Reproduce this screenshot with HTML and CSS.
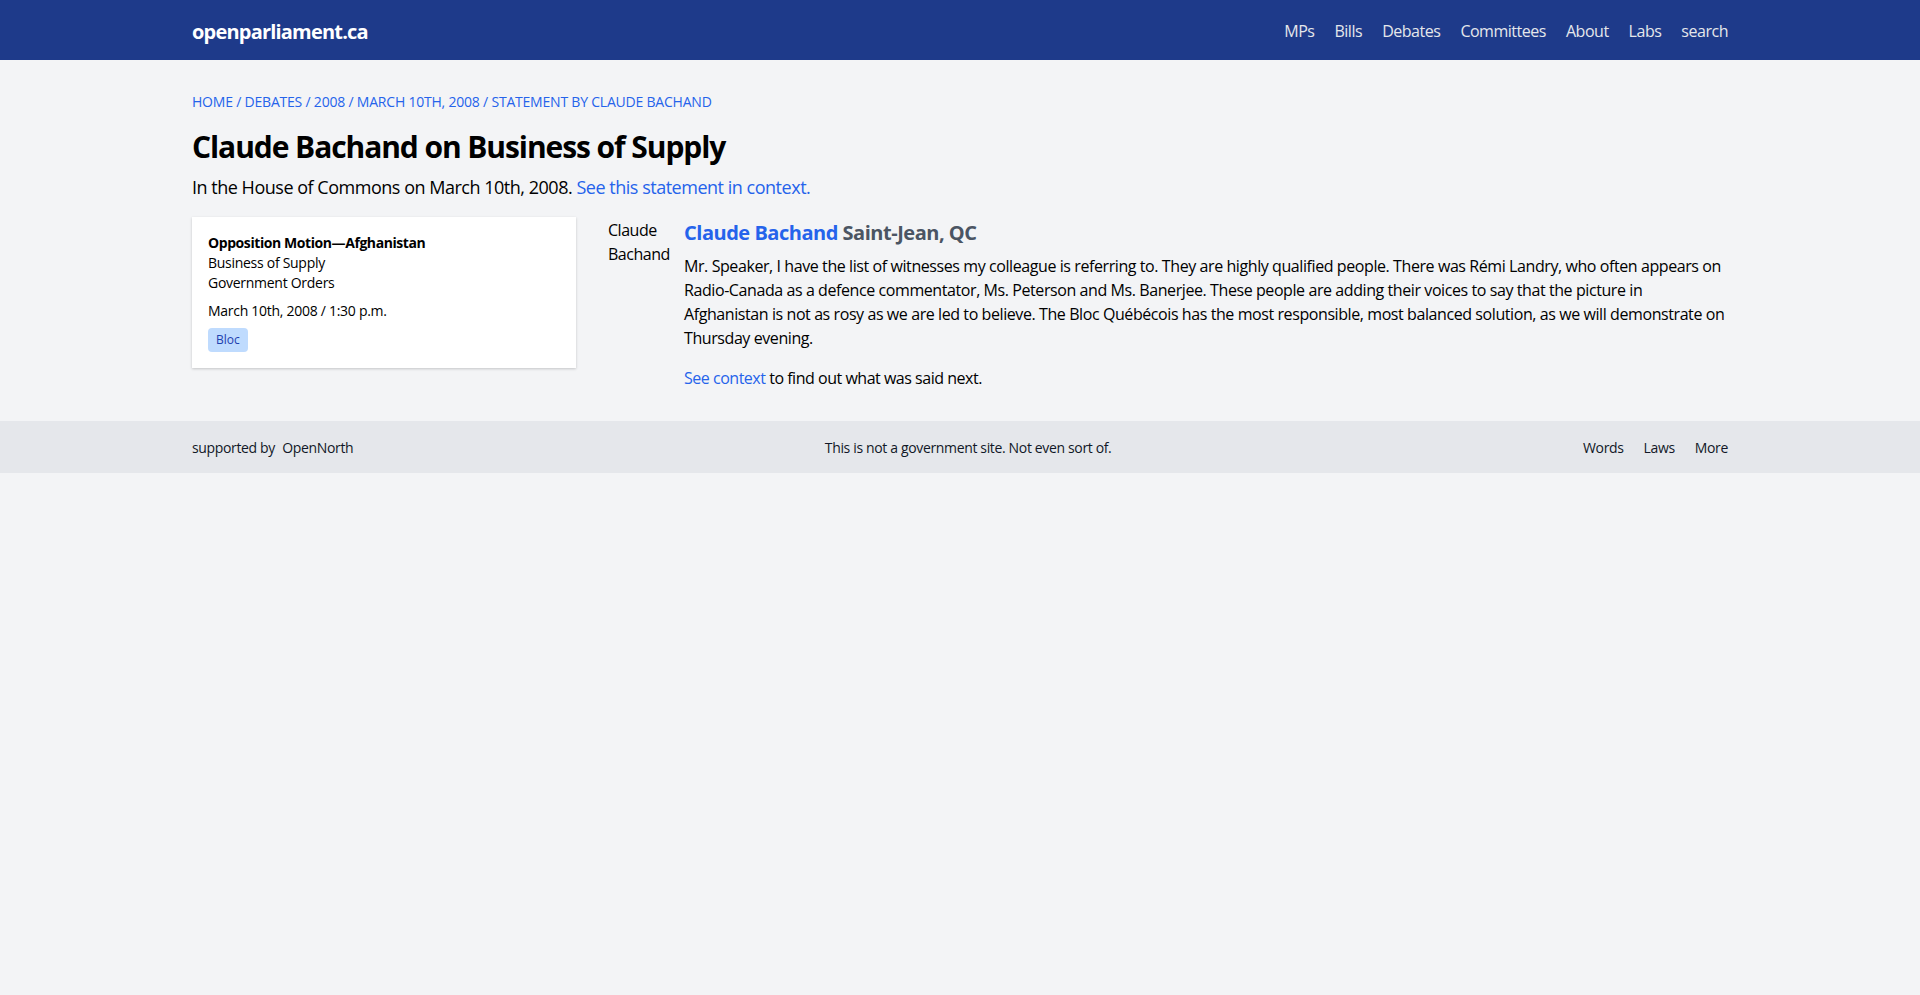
FILE: index.html
```html
<!DOCTYPE html>
<html lang="en">
<head>
<meta charset="utf-8">
<title>Claude Bachand on Business of Supply</title>
<link rel="stylesheet" href="styles.css">
</head>
<body>
<header class="topbar">
  <div class="container topbar-inner">
    <a class="logo" href="#">openparliament.ca</a>
    <nav class="mainnav">
      <a href="#">MPs</a>
      <a href="#">Bills</a>
      <a href="#">Debates</a>
      <a href="#">Committees</a>
      <a href="#">About</a>
      <a href="#">Labs</a>
      <a href="#">search</a>
    </nav>
  </div>
</header>

<main class="container content">
  <div class="breadcrumbs">
    <a href="#">Home</a> / <a href="#">Debates</a> / <a href="#">2008</a> / <a href="#">March 10th, 2008</a> / <a href="#">Statement by Claude Bachand</a>
  </div>
  <h1 class="title">Claude Bachand on Business of Supply</h1>
  <p class="subtitle">In the House of Commons on March 10th, 2008. <a href="#">See this statement in context.</a></p>

  <div class="layout">
    <aside class="card">
      <div class="card-title">Opposition Motion—Afghanistan</div>
      <div class="card-line">Business of Supply</div>
      <div class="card-line">Government Orders</div>
      <div class="card-date">March 10th, 2008 / 1:30 p.m.</div>
      <span class="badge">Bloc</span>
    </aside>

    <article class="statement">
      <div class="speaker-pic">Claude Bachand</div>
      <div class="statement-body">
        <h2 class="speaker"><a href="#">Claude Bachand</a> <span class="riding">Saint-Jean, QC</span></h2>
        <p class="speech">Mr. Speaker, I have the list of witnesses my colleague is referring to. They are highly qualified people. There was Rémi Landry, who often appears on Radio-Canada as a defence commentator, Ms. Peterson and Ms. Banerjee. These people are adding their voices to say that the picture in Afghanistan is not as rosy as we are led to believe. The Bloc Québécois has the most responsible, most balanced solution, as we will demonstrate on Thursday evening.</p>
        <p class="next"><a href="#">See context</a> to find out what was said next.</p>
      </div>
    </article>
  </div>
</main>

<footer class="footer">
  <div class="container footer-inner">
    <div class="footer-left">supported by <span class="opennorth">OpenNorth</span></div>
    <div class="footer-center">This is not a government site. Not even sort of.</div>
    <nav class="footer-right">
      <a href="#">Words</a>
      <a href="#">Laws</a>
      <a href="#">More</a>
    </nav>
  </div>
</footer>
</body>
</html>
```

FILE: styles.css
```css
* { box-sizing: border-box; }

body {
  margin: 0;
  background: #f3f4f6;
  color: #000;
  font-family: "Open Sans", "Noto Sans", "Liberation Sans", sans-serif;
  letter-spacing: -0.03em;
}

a { text-decoration: none; }

.container {
  width: 1536px;
  margin: 0 auto;
}

.topbar {
  background: #1e3a8a;
  height: 60px;
}

.topbar-inner {
  height: 60px;
  display: flex;
  align-items: center;
  justify-content: space-between;
}

.logo {
  color: #fff;
  font-weight: 700;
  font-size: 20px;
  letter-spacing: -0.04em;
  padding-top: 2px;
}

.mainnav {
  display: flex;
  gap: 20px;
  padding-top: 2px;
}

.mainnav a {
  color: #e5e7eb;
  font-size: 16px;
}

.content {
  padding-top: 32px;
  padding-bottom: 31px;
}

.breadcrumbs {
  font-size: 14px;
  line-height: 20px;
  text-transform: uppercase;
  letter-spacing: -0.015em;
  color: #2563eb;
}

.breadcrumbs a { color: #2563eb; }

.title {
  margin: 17px 0 0;
  font-size: 30px;
  line-height: 36px;
  font-weight: 700;
  letter-spacing: -0.036em;
}

.subtitle {
  margin: 8px 0 0;
  font-size: 18px;
  line-height: 28px;
}

.subtitle a { color: #2563eb; }

.layout {
  display: flex;
  align-items: flex-start;
  margin-top: 16px;
}

.card {
  width: 384px;
  flex: none;
  background: #fff;
  padding: 16px;
  box-shadow: 0 1px 3px rgba(0,0,0,0.12), 0 1px 2px rgba(0,0,0,0.08);
  font-size: 14px;
  line-height: 20px;
  letter-spacing: -0.02em;
}

.card-title { font-weight: 700; letter-spacing: -0.03em; }

.card-date { margin-top: 8px; }

.badge {
  display: inline-block;
  margin-top: 7px;
  background: #bfdbfe;
  color: #1e40af;
  font-size: 12px;
  line-height: 16px;
  padding: 4px 8px;
  border-radius: 4px;
  letter-spacing: 0;
}

.statement {
  flex: 1;
  display: flex;
  margin-left: 32px;
  gap: 12px;
}

.speaker-pic {
  width: 64px;
  flex: none;
  font-size: 16px;
  line-height: 24px;
  padding-top: 1px;
}

.statement-body { flex: 1; }

.speaker {
  margin: 2px 0 0;
  font-size: 20px;
  line-height: 28px;
  font-weight: 700;
}

.speaker a { color: #2563eb; }
.riding { color: #4b5563; }

.speech {
  margin: 7px 0 0;
  font-size: 16px;
  line-height: 24px;
  letter-spacing: -0.026em;
}

.next {
  margin: 16px 0 0;
  font-size: 16px;
  line-height: 24px;
}

.next a { color: #2563eb; }

.footer {
  background: #e5e7eb;
  height: 52px;
}

.footer-inner {
  height: 52px;
  display: flex;
  justify-content: space-between;
  align-items: center;
  font-size: 14px;
  letter-spacing: -0.025em;
  color: #111827;
}

.footer-left .opennorth { margin-left: 4px; }

.footer-right {
  display: flex;
  gap: 20px;
}

.footer-right a { color: #111827; }
```
